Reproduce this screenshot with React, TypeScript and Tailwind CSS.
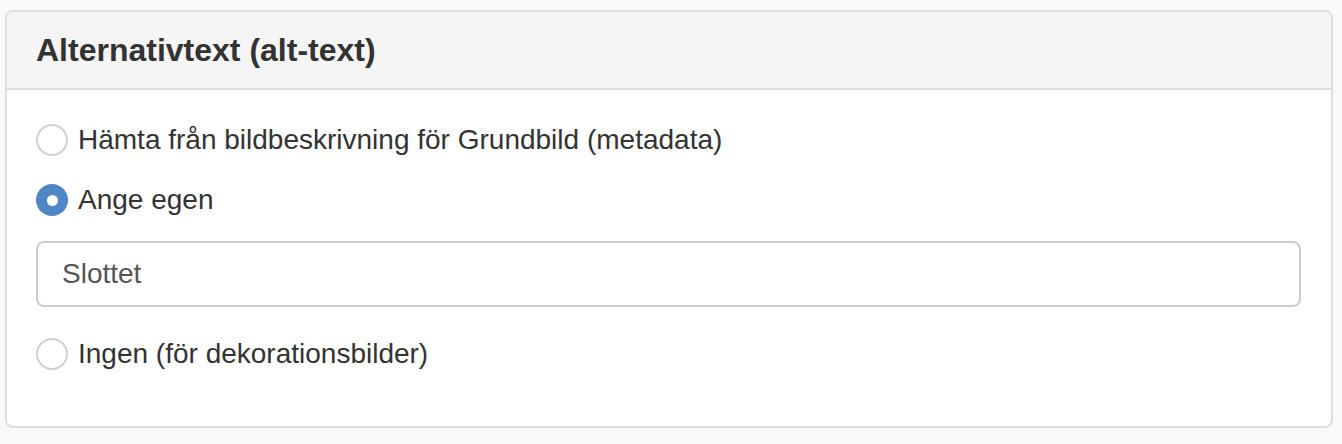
import React from "react";

function Radio({ checked }: { checked?: boolean }) {
  if (checked) {
    return (
      <span className="flex h-[32px] w-[32px] shrink-0 items-center justify-center rounded-full bg-[#4f86c6]">
        <span className="h-[11px] w-[11px] rounded-full bg-white" />
      </span>
    );
  }
  return <span className="h-[32px] w-[32px] shrink-0 rounded-full border-2 border-[#cfcfcf] bg-white" />;
}

export default function App() {
  return (
    <div className="min-h-[444px] w-[1342px] bg-[#f9f9f9] pt-[10px] pl-[5px]" style={{ fontFamily: '"Liberation Sans", Arial, sans-serif' }}>
      <div className="w-[1328px] h-[418px] rounded-[8px] border-2 border-[#dedede] bg-white overflow-hidden">
        <div className="h-[78px] border-b-2 border-[#dedede] bg-[#f5f5f5] pl-[29px] flex items-center">
          <h3 className="text-[32px] font-bold text-[#333]">Alternativtext (alt-text)</h3>
        </div>
        <div className="pl-[29px] pr-[29px] pt-[34px]">
          <label className="flex h-[32px] items-center gap-[10px] text-[28px] text-[#333]">
            <Radio />
            <span>Hämta från bildbeskrivning för Grundbild (metadata)</span>
          </label>
          <label className="mt-[28px] flex h-[32px] items-center gap-[10px] text-[28px] text-[#333]">
            <Radio checked />
            <span>Ange egen</span>
          </label>
          <div className="mt-[25px] flex h-[66px] w-[1265px] items-center rounded-[8px] border-2 border-[#cccccc] bg-white pl-[24px] text-[28px] text-[#555]">
            Slottet
          </div>
          <label className="mt-[31px] flex h-[32px] items-center gap-[10px] text-[28px] text-[#333]">
            <Radio />
            <span>Ingen (för dekorationsbilder)</span>
          </label>
        </div>
      </div>
    </div>
  );
}
